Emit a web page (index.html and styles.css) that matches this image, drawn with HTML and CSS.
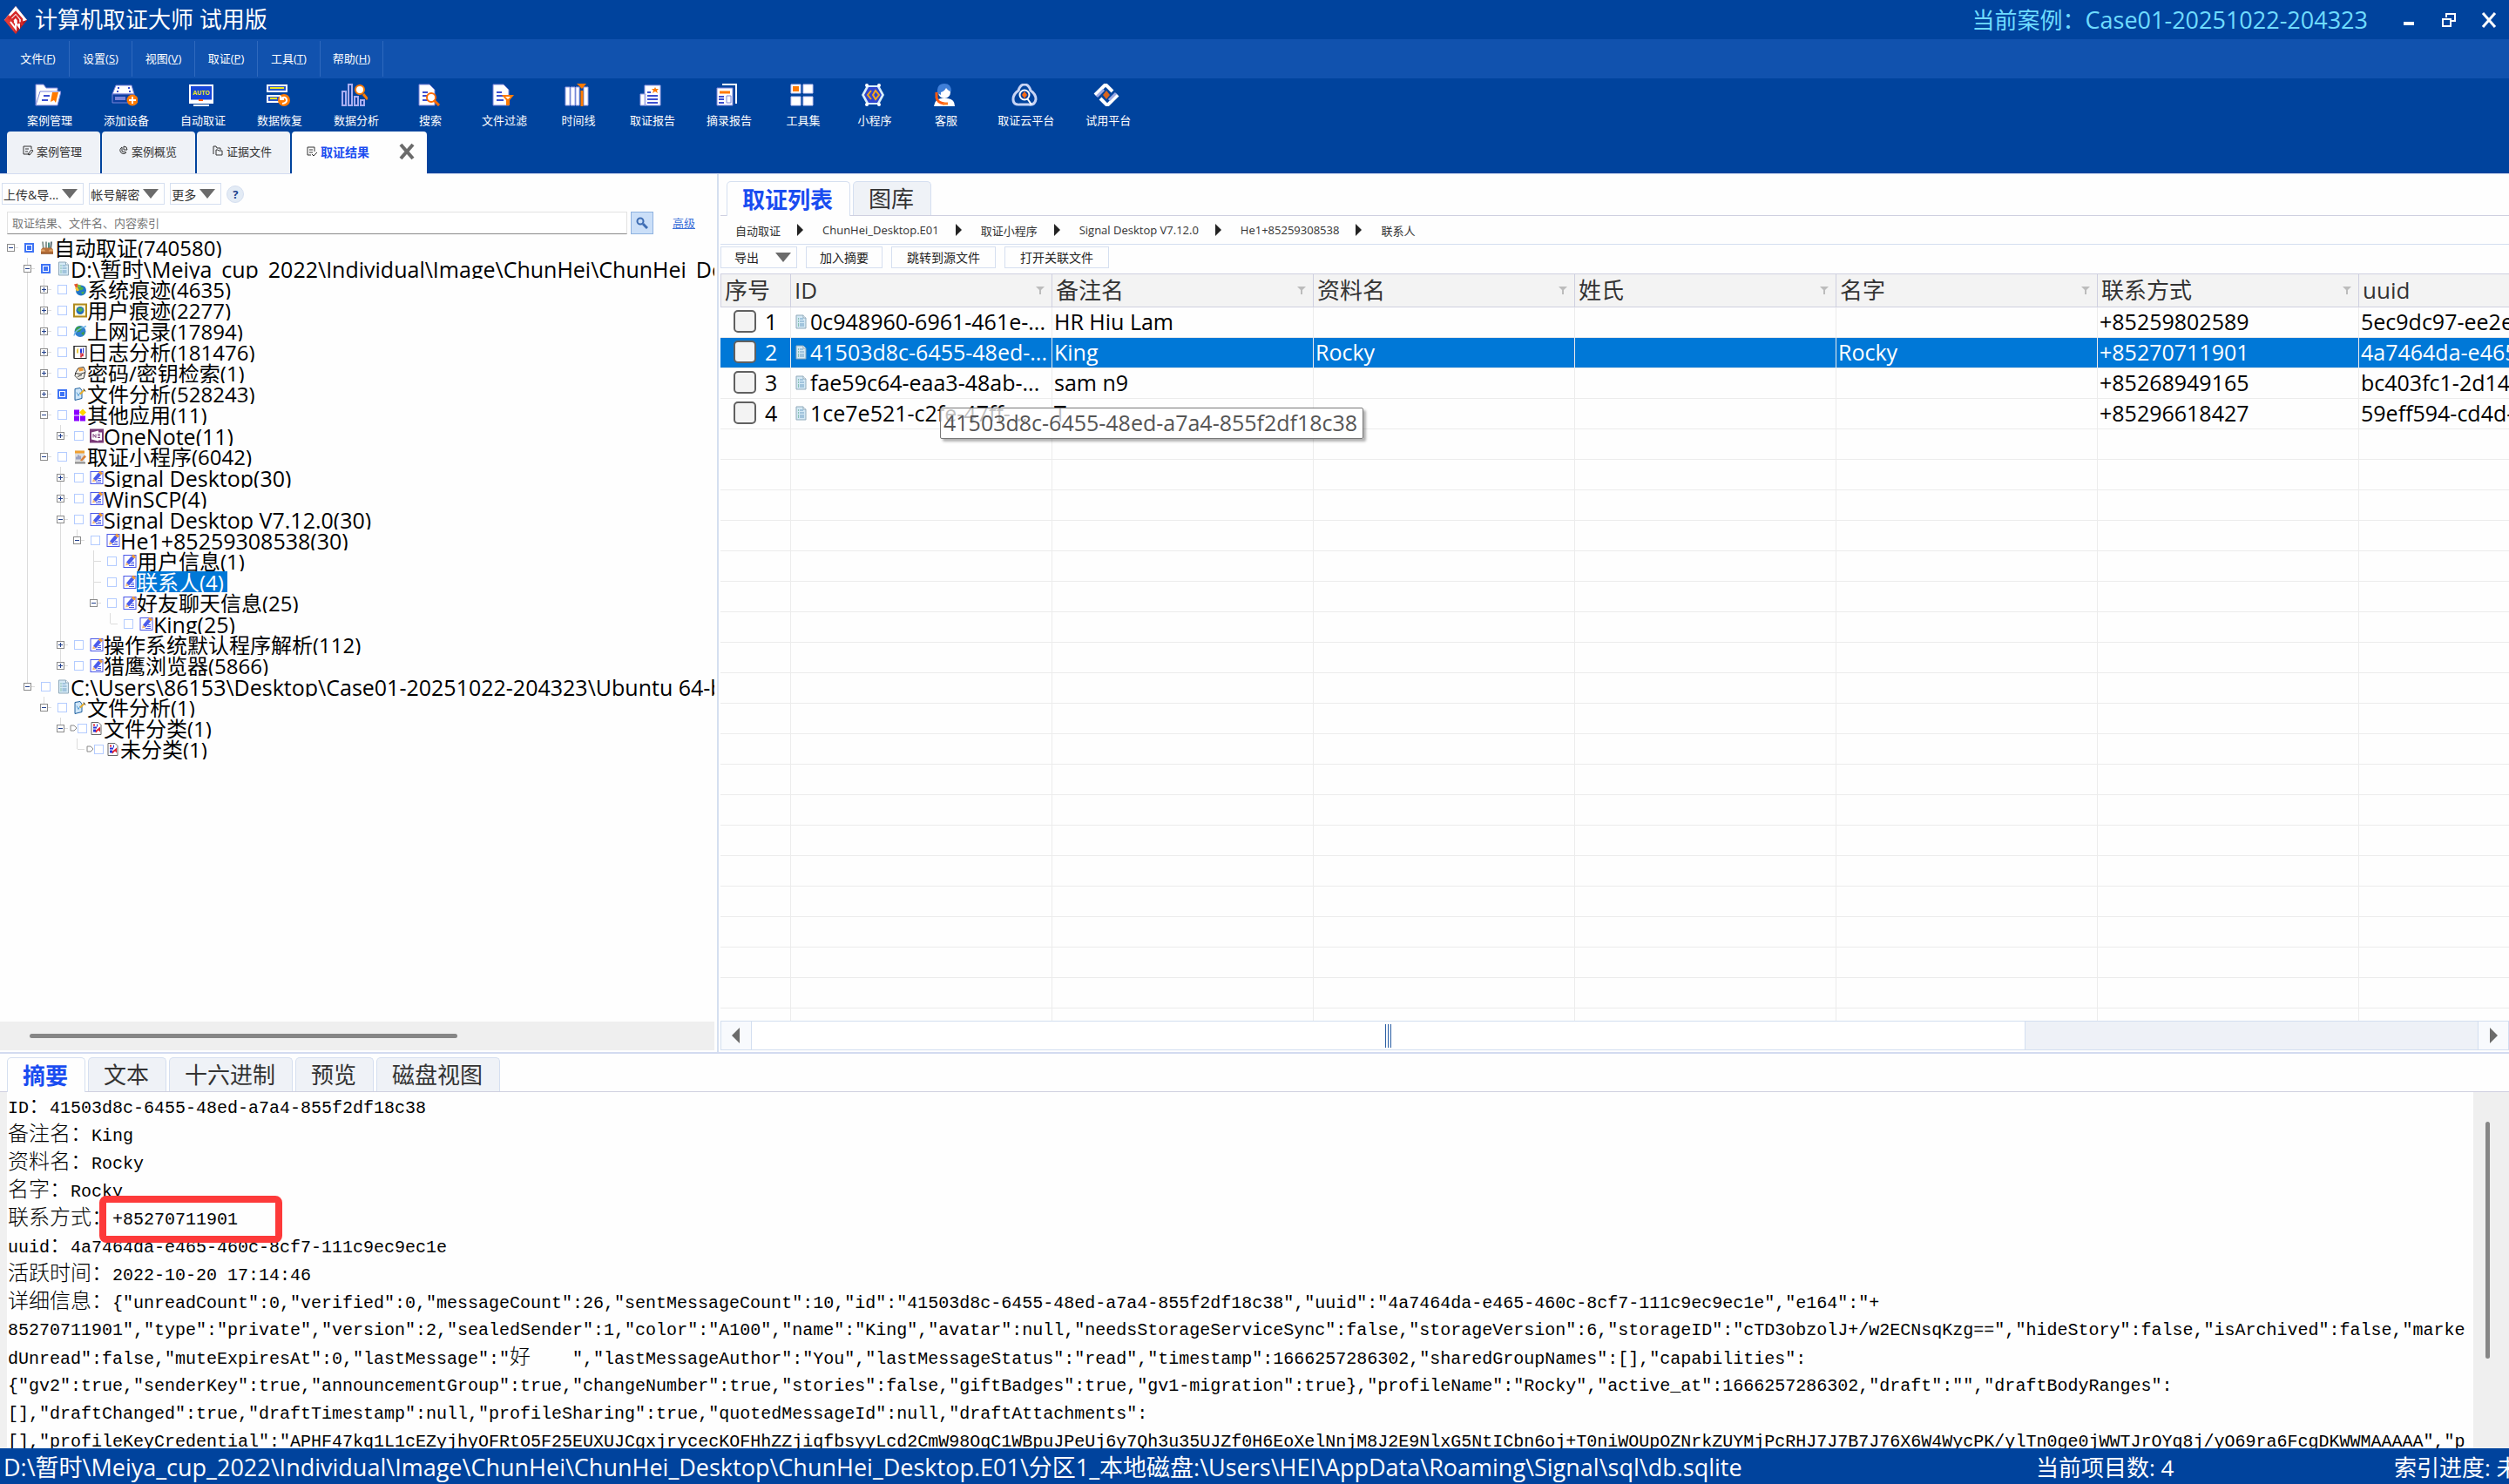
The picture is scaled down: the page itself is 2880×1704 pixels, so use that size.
FILE: index.html
```html
<!DOCTYPE html>
<html lang="zh-CN">
<head>
<meta charset="utf-8">
<title>计算机取证大师 试用版</title>
<link rel="stylesheet" href="styles.css">
</head>
<body>
<svg class="defs" aria-hidden="true">
  <symbol id="i-disk" viewBox="0 0 16 16"><path d="M2 1h2l1 9H3zM6 1h2v9H6z" fill="#8a9a96"/><path d="M9 2h2v8H9z" fill="#4e8f86"/><path d="M12 1h2l-1 9h-2z" fill="#5f6f78"/><path d="M1 10l2-2h10l2 2v5H1z" fill="#b9713a"/><path d="M1 10h4l1 2h4l1-2h4v2H1z" fill="#e0a56b"/><path d="M1 14h14v1H1z" fill="#7d4318"/></symbol>
  <symbol id="i-doc" viewBox="0 0 13 17"><path d="M1 1h8l3 3v12H1z" fill="#d4e9f5" stroke="#8fa9ba"/><path d="M9 1v3h3" fill="#fff" stroke="#8fa9ba"/><path d="M3 5h1M3 8h1M3 11h1M3 13h1" stroke="#3c9a6a"/><path d="M5 5h4M5 8h5M5 11h5M5 13h5" stroke="#6f9fc4"/></symbol>
  <symbol id="i-globe" viewBox="0 0 16 16"><circle cx="9" cy="9" r="6" fill="#1f74c8"/><path d="M7 5q4-1 5 2l-3 2-3-1zM9 11l4-1-2 4z" fill="#49b04a"/><path d="M1 2l4-1 1 4-3 1z" fill="#e4582b"/><path d="M5 2l4 1-1 3-3-1z" fill="#7ac143"/><path d="M2 6l3-1 2 4-3 1z" fill="#f5c431"/></symbol>
  <symbol id="i-user" viewBox="0 0 16 16"><rect x="1" y="1" width="14" height="14" fill="#fff7d8" stroke="#b08a1c" stroke-width="2"/><circle cx="8" cy="8" r="4.500" fill="#1f6fc0"/><path d="M6 5l4 0 1 3-3 2-3-2z" fill="#4fb04c"/></symbol>
  <symbol id="i-net" viewBox="0 0 16 16"><circle cx="8" cy="8" r="6.500" fill="#2f7fcf"/><path d="M4 3q4-2 7 1l-3 4-4 1-2-2zM9 10l4-2-1 5z" fill="#3c9d47"/><path d="M1 13q1-7 14-11" stroke="#6fb5e8" stroke-width="1.500" fill="none"/></symbol>
  <symbol id="i-log" viewBox="0 0 16 16"><rect x="1" y="1" width="14" height="14" fill="#fff" stroke="#222"/><path d="M1 1v14" stroke="#222" stroke-width="2" stroke-dasharray="1 1"/><path d="M4 5l2-2v6H4z" fill="#e8c840"/><path d="M8 4h2v5H8zM11 3h1v6h-1z" fill="#2433d8"/><path d="M8 10h3v2H9v2" stroke="#d02030" fill="none" stroke-width="1.500"/></symbol>
  <symbol id="i-key" viewBox="0 0 16 16"><path d="M3 7l3-5 6-1 2 5-2 8-6 1-4-4z" fill="#f3f0e8" stroke="#333"/><path d="M6 2l5 0 1 3-5 1z" fill="#f29a30"/><path d="M2 8l6 1 6-2M5 12l5-2" stroke="#333" fill="none"/></symbol>
  <symbol id="i-edit" viewBox="0 0 16 16"><path d="M2 2l6-1 2 3v9l-8 2z" fill="#cfe6f8" stroke="#1d5f9e"/><path d="M4 6l2 4 2-4" stroke="#5aa0d6" fill="none"/><path d="M8 8l5-5" stroke="#e8ad2a" stroke-width="2"/><path d="M12 2l2 3" stroke="#2a2a2a"/></symbol>
  <symbol id="i-apps" viewBox="0 0 16 16"><path d="M1 2h6v6H1zM1 9h6v6H1zM8 9h6v6H8z" fill="#8a00ff"/><path d="M11 1l4 4-4 4-4-4z" fill="#ffd400"/></symbol>
  <symbol id="i-one" viewBox="0 0 16 16"><rect width="16" height="16" fill="#7a3a78"/><path d="M2 4l8-2v2h4v9h-4v1l-8-2z" fill="#fff"/><path d="M4 10V6l3 4V6M9 6h3M9 8h3M9 10h3" stroke="#7a3a78" fill="none"/></symbol>
  <symbol id="i-mini" viewBox="0 0 16 16"><path d="M2 1h11v14H2z" fill="#dcdcdc"/><path d="M2 1h11v3H2z" fill="#f0a030"/><path d="M4 11V8M6 11V6M8 11V7" stroke="#5566aa"/><path d="M8 12l5-6 2 2-5 5z" fill="#d9803a"/><path d="M2 14h12v2H2z" fill="#8a8a8a"/></symbol>
  <symbol id="i-pen" viewBox="0 0 16 16"><rect x="1" y="1" width="14" height="14" fill="#fff" stroke="#4a57e8"/><path d="M4 9l6-7 3 3-6 7z" fill="#4b5bea"/><path d="M10 2l2-2 3 3-2 2z" fill="#f09a38"/><path d="M4 9l3 3-4 1z" fill="#f3b878"/><path d="M10 9h3M9 11h4M7 13h6" stroke="#4a57e8"/></symbol>
  <symbol id="i-cat" viewBox="0 0 16 16"><path d="M2 1h8l3 3v11H2z" fill="#fff" stroke="#666"/><path d="M4 3h2v2H4zM6 11l6-5v6l-2-2-3 3z" fill="#e02030"/><path d="M4 6h4v2H4zM4 9h3v3H4zM8 3h1v3H8z" fill="#2433d8"/></symbol>
  <symbol id="i-filter" viewBox="0 0 10 10"><path d="M0 0h10L6 4v5H4V4z" fill="#bcbcbc"/></symbol>
</svg>

<header class="top">
  <div class="titlebar">
    <svg class="logo" viewBox="0 0 26 32"><path d="M13 0l13 16-13 16L0 16z" fill="#d42a2a"/><path d="M13 0l13 16-13 4L0 16z" fill="#fff"/><path d="M0 16l5-6 6 7v12l2 3z" fill="#e23a36"/><path d="M13 32l13-16-7 3-6 13z" fill="#a91f26"/><path d="M5 15l8-8 7 8v7M9 20v-4l4-4 3 4v8" fill="none" stroke="#d62828" stroke-width="2.500"/><path d="M7 18l6 8v-7l4 5v-4" fill="none" stroke="#fff" stroke-width="2"/></svg>
    <h1 class="app-name">计算机取证大师 试用版</h1>
    <p class="case-name">当前案例：<span>Case01-20251022-204323</span></p>
    <div class="win-buttons">
      <button type="button" aria-label="最小化"><svg viewBox="0 0 18 18"><path d="M3 13h12" stroke="#fff" stroke-width="4"/></svg></button>
      <button type="button" aria-label="还原"><svg viewBox="0 0 18 18"><path d="M6 6V2h10v8h-4M5 2h12" fill="none" stroke="#fff" stroke-width="2"/><path d="M2 8h9v8H2z" fill="none" stroke="#fff" stroke-width="2"/></svg></button>
      <button type="button" aria-label="关闭"><svg viewBox="0 0 18 18"><path d="M2 1l14 16M16 1L2 17" stroke="#fff" stroke-width="3"/></svg></button>
    </div>
  </div>
  <nav class="menubar" aria-label="菜单">
    <button type="button">文件(<u>F</u>)</button>
    <button type="button">设置(<u>S</u>)</button>
    <button type="button">视图(<u>V</u>)</button>
    <button type="button">取证(<u>P</u>)</button>
    <button type="button">工具(<u>T</u>)</button>
    <button type="button">帮助(<u>H</u>)</button>
  </nav>
  <div class="toolbar">
    <button type="button"><svg viewBox="0 0 30 26"><path d="M1 25V1h9l3 4h13v4" fill="#fff" stroke="#7a84d8"/><path d="M6 9h24l-4 16H1z" fill="#fff" stroke="#7a84d8"/><path d="M10 14h7M8 19h7" stroke="#3c4fd0" stroke-width="2"/><path d="M20 10h7l-3 12-2-3-4 2z" fill="#ff7a00"/></svg>案例管理</button>
    <button type="button"><svg viewBox="0 0 30 26"><path d="M5 2h18l3 10H1z" fill="#fff" stroke="#7a84d8"/><path d="M1 12h25v10H1z" fill="#0d3fa0" stroke="#7a84d8"/><path d="M4 17h12" stroke="#7a84d8" stroke-width="4"/><path d="M7 5h2M19 5h2M6 9h2M20 9h2" stroke="#3c4fd0" stroke-width="2"/><circle cx="24" cy="19" r="6.500" fill="#ff7a00"/><path d="M20 19h8M24 15v8" stroke="#fff" stroke-width="2"/></svg>添加设备</button>
    <button type="button"><svg viewBox="0 0 30 26"><rect x="2" y="2" width="26" height="20" fill="#1746d8" stroke="#fff" stroke-width="2"/><path d="M3 20h24" stroke="#fff" stroke-width="3"/><path d="M12 19h5" stroke="#ff5a00" stroke-width="2"/><path d="M6 25h18" stroke="#fff" stroke-width="2"/><text x="15" y="13" class="auto-text">AUTO</text></svg>自动取证</button>
    <button type="button"><svg viewBox="0 0 30 26"><path d="M3 2h22v7H3zM3 14h22v7H3z" fill="#2a55c8" stroke="#fff" stroke-width="2"/><path d="M6 5h16M6 17h8" stroke="#ece51c" stroke-width="2"/><circle cx="22" cy="19" r="7" fill="#ff7a00"/><path d="M20 23q6-1 5-5-2-4-6-1M18 14v4h4" fill="none" stroke="#fff" stroke-width="2"/></svg>数据恢复</button>
    <button type="button"><svg viewBox="0 0 30 26"><path d="M1 9h4v16H1zM8 1h4v24H8zM15 15h4v10h-4zM22 19h4v6h-4z" fill="#0d3fa0" stroke="#a9aef0" stroke-width="2"/><path d="M25 12l5 6" stroke="#ff7a00" stroke-width="3"/><circle cx="21" cy="7" r="5" fill="#fff" stroke="#ff7a00" stroke-width="2"/></svg>数据分析</button>
    <button type="button"><svg viewBox="0 0 30 26"><path d="M4 1h12l6 6v18H4z" fill="#fff" stroke="#7a84d8"/><path d="M8 10h6M8 14h5M8 19h6" stroke="#3c4fd0" stroke-width="2"/><circle cx="18" cy="16" r="5" fill="#fff" stroke="#ff6a00" stroke-width="2"/><path d="M21 19l6 6" stroke="#ff6a00" stroke-width="3"/></svg>搜索</button>
    <button type="button"><svg viewBox="0 0 30 26"><path d="M4 1h12l6 6v18H4z" fill="#fff" stroke="#7a84d8"/><path d="M8 10h6M8 14h8M8 19h8" stroke="#3c4fd0" stroke-width="2"/><path d="M14 13h14l-5 6v6l-4 0v-6z" fill="#ff7a00"/><path d="M18 15h6l-3 3z" fill="#fff"/></svg>文件过滤</button>
    <button type="button"><svg viewBox="0 0 30 26"><path d="M2 4h5v21H2zM8 4h5v21H8zM14 4h4v21h-4zM23 4h5v21h-5z" fill="#fff" stroke="#9aa0e6"/><path d="M21 8v18" stroke="#ff7a00" stroke-width="3"/><path d="M15 0h11l-5 6z" fill="#ff7a00"/></svg>时间线</button>
    <button type="button"><svg viewBox="0 0 30 26"><path d="M3 12h6v13H3zM8 2h18v23H8z" fill="#fff" stroke="#9aa0e6"/><path d="M11 10h4M11 14h12M11 18h12M11 22h12" stroke="#3c4fd0" stroke-width="2"/><path d="M20 4l1 2h3l-2 2 1 3-3-2-3 2 1-3-2-2h3z" fill="#ff7a00"/></svg>取证报告</button>
    <button type="button"><svg viewBox="0 0 30 26"><path d="M9 1h16v22" fill="none" stroke="#fff" stroke-width="2"/><path d="M3 5h18v20H3z" fill="#fff" stroke="#7a84d8"/><path d="M6 10h12" stroke="#ff7a00" stroke-width="3"/><path d="M5 15h6M5 18h6M5 22h6" stroke="#3c4fd0" stroke-width="2"/><path d="M14 14h5v8h-5z" fill="#fff" stroke="#7a84d8"/></svg>摘录报告</button>
    <button type="button"><svg viewBox="0 0 30 26"><path d="M3 1h11v10H3zM17 1h11v10H17zM3 15h11v10H3zM17 15h11v10H17z" fill="#fff" stroke="#c5c8f4"/><path d="M5 3h7v6H5z" fill="#ff7a00"/></svg>工具集</button>
    <button type="button"><svg viewBox="0 0 30 26"><path d="M8 2h14l6 11-6 11H8L2 13z" fill="#d8f0fa"/><path d="M10 4h10l5 9-5 9H10l-5-9z" fill="#2f45d0"/><path d="M13 8l-4 5 4 5M18 8l4 5-4 5-3-5z" fill="none" stroke="#f0a818" stroke-width="2"/><circle cx="8" cy="2" r="2" fill="#fff"/><circle cx="22" cy="2" r="2" fill="#fff"/><circle cx="8" cy="24" r="2" fill="#fff"/><circle cx="22" cy="24" r="2" fill="#fff"/></svg>小程序</button>
    <button type="button"><svg viewBox="0 0 30 26"><path d="M3 26q1-8 8-9h8q8 1 8 9z" fill="#fff"/><circle cx="15" cy="10" r="7" fill="#fff"/><path d="M7 11Q6 0 15 0q8 0 8 9-3 0-6-4-2 4-6 5v3z" fill="#3f7fd8"/><path d="M6 10v6q1 6 9 7" fill="none" stroke="#ff5a10" stroke-width="3"/><path d="M13 23h6" stroke="#ff7a20" stroke-width="3"/></svg>客服</button>
    <button type="button"><svg viewBox="0 0 30 26"><path d="M8 8q2-7 7-7t7 7q6 4 6 10-1 7-8 6H10Q2 25 2 18 2 12 8 8z" fill="none" stroke="#c8d4f4" stroke-width="3"/><circle cx="15" cy="13" r="5.500" fill="#0a3f98" stroke="#fff" stroke-width="2"/><path d="M18 17l5 7" stroke="#fff" stroke-width="2"/><path d="M15 9l3 4-3 4-3-4z" fill="#ff6a10"/></svg>取证云平台</button>
    <button type="button"><svg viewBox="0 0 30 26"><path d="M2 13L14 1l8 8" fill="none" stroke="#fff" stroke-width="4"/><path d="M28 13L16 25l-8-8" fill="none" stroke="#fff" stroke-width="4"/><path d="M4 15l8-8M26 11l-8 8" stroke="#9aa8e4" stroke-width="3"/><path d="M15 8l4 5-4 5-4-5z" fill="#d9641e"/></svg>试用平台</button>
  </div>
  <div class="page-tabs" role="tablist">
    <button type="button" role="tab"><svg viewBox="0 0 12 12"><path d="M8 10H1V1h9v3M3 4h4M3 7h3M6 10l4-5 2 1-4 5z"/></svg>案例管理</button>
    <button type="button" role="tab"><svg viewBox="0 0 12 12"><path d="M5 2a4 4 0 1 0 5 6L5 7zM7 1v4h4q0-4-4-4z"/></svg>案例概览</button>
    <button type="button" role="tab"><svg viewBox="0 0 12 12"><path d="M1 10V1h3l1 2h4v2M4 11V5h2l1 1h4v5z"/></svg>证据文件</button>
    <button type="button" role="tab" class="active" aria-selected="true"><svg viewBox="0 0 12 12"><path d="M5 10H1V1h8v5M3 4h4M3 7h4M6 9l2 2 4-4"/></svg>取证结果<svg class="close" viewBox="0 0 16 16"><path d="M1 0l14 16M15 0L1 16"/></svg></button>
  </div>
</header>

<main class="workspace">
  <aside class="side">
    <div class="side-tools">
      <button type="button">上传&amp;导...<i class="caret"></i></button>
      <button type="button">帐号解密<i class="caret"></i></button>
      <button type="button">更多<i class="caret"></i></button>
      <button type="button" class="help">?</button>
    </div>
    <form class="search">
      <input type="text" aria-label="搜索" placeholder="取证结果、文件名、内容索引">
      <button type="button" aria-label="搜索"><svg viewBox="0 0 14 14"><circle cx="5" cy="5" r="3.500" fill="none" stroke="#3f6eb4" stroke-width="2"/><path d="M8 8l5 5" stroke="#3f6eb4" stroke-width="3"/></svg></button>
      <a href="#">高级</a>
    </form>
    <ul class="tree">
      <li><div class="node"><i class="exp"></i><input type="checkbox" aria-label="自动取证" checked><svg><use href="#i-disk"/></svg><span>自动取证(740580)</span></div>
        <ul>
          <li><div class="node"><i class="exp"></i><input type="checkbox" aria-label="ChunHei_Desktop.E01" checked><svg><use href="#i-doc"/></svg><span class="latin">D:\暂时\Meiya_cup_2022\Individual\Image\ChunHei\ChunHei_Desktop</span></div>
            <ul>
              <li><div class="node"><i class="exp plus"></i><input type="checkbox" aria-label="系统痕迹"><svg><use href="#i-globe"/></svg><span>系统痕迹(4635)</span></div></li>
              <li><div class="node"><i class="exp plus"></i><input type="checkbox" aria-label="用户痕迹"><svg><use href="#i-user"/></svg><span>用户痕迹(2277)</span></div></li>
              <li><div class="node"><i class="exp plus"></i><input type="checkbox" aria-label="上网记录"><svg><use href="#i-net"/></svg><span>上网记录(17894)</span></div></li>
              <li><div class="node"><i class="exp plus"></i><input type="checkbox" aria-label="日志分析"><svg><use href="#i-log"/></svg><span>日志分析(181476)</span></div></li>
              <li><div class="node"><i class="exp plus"></i><input type="checkbox" aria-label="密码检索"><svg><use href="#i-key"/></svg><span>密码/密钥检索(1)</span></div></li>
              <li><div class="node"><i class="exp plus"></i><input type="checkbox" aria-label="文件分析" checked><svg><use href="#i-edit"/></svg><span>文件分析(528243)</span></div></li>
              <li><div class="node"><i class="exp"></i><input type="checkbox" aria-label="其他应用"><svg><use href="#i-apps"/></svg><span>其他应用(11)</span></div>
                <ul>
                  <li><div class="node"><i class="exp plus"></i><input type="checkbox" aria-label="OneNote"><svg><use href="#i-one"/></svg><span class="latin">OneNote(11)</span></div></li>
                </ul>
              </li>
              <li><div class="node"><i class="exp"></i><input type="checkbox" aria-label="取证小程序"><svg><use href="#i-mini"/></svg><span>取证小程序(6042)</span></div>
                <ul>
                  <li><div class="node"><i class="exp plus"></i><input type="checkbox" aria-label="Signal Desktop"><svg><use href="#i-pen"/></svg><span class="latin">Signal Desktop(30)</span></div></li>
                  <li><div class="node"><i class="exp plus"></i><input type="checkbox" aria-label="WinSCP"><svg><use href="#i-pen"/></svg><span class="latin">WinSCP(4)</span></div></li>
                  <li><div class="node"><i class="exp"></i><input type="checkbox" aria-label="Signal Desktop V7.12.0"><svg><use href="#i-pen"/></svg><span class="latin">Signal Desktop V7.12.0(30)</span></div>
                    <ul>
                      <li><div class="node"><i class="exp"></i><input type="checkbox" aria-label="He1"><svg><use href="#i-pen"/></svg><span class="latin">He1+85259308538(30)</span></div>
                        <ul>
                          <li><div class="node"><i class="exp leaf"></i><input type="checkbox" aria-label="用户信息"><svg><use href="#i-pen"/></svg><span>用户信息(1)</span></div></li>
                          <li><div class="node selected"><i class="exp leaf"></i><input type="checkbox" aria-label="联系人"><svg><use href="#i-pen"/></svg><span>联系人(4)</span></div></li>
                          <li><div class="node"><i class="exp"></i><input type="checkbox" aria-label="好友聊天信息"><svg><use href="#i-pen"/></svg><span>好友聊天信息(25)</span></div>
                            <ul>
                              <li><div class="node"><i class="exp leaf"></i><input type="checkbox" aria-label="King"><svg><use href="#i-pen"/></svg><span class="latin">King(25)</span></div></li>
                            </ul>
                          </li>
                        </ul>
                      </li>
                    </ul>
                  </li>
                  <li><div class="node"><i class="exp plus"></i><input type="checkbox" aria-label="操作系统默认程序解析"><svg><use href="#i-pen"/></svg><span>操作系统默认程序解析(112)</span></div></li>
                  <li><div class="node"><i class="exp plus"></i><input type="checkbox" aria-label="猎鹰浏览器"><svg><use href="#i-pen"/></svg><span>猎鹰浏览器(5866)</span></div></li>
                </ul>
              </li>
            </ul>
          </li>
          <li><div class="node"><i class="exp"></i><input type="checkbox" aria-label="Ubuntu 64-bit"><svg><use href="#i-doc"/></svg><span class="latin">C:\Users\86153\Desktop\Case01-20251022-204323\Ubuntu 64-bit</span></div>
            <ul>
              <li><div class="node"><i class="exp"></i><input type="checkbox" aria-label="文件分析"><svg><use href="#i-edit"/></svg><span>文件分析(1)</span></div>
                <ul>
                  <li><div class="node tagged"><i class="exp"></i><svg class="tag" viewBox="0 0 9 8"><path d="M1 1h4l3 3-3 3H1z" fill="#fff" stroke="#888"/></svg><input type="checkbox" aria-label="文件分类"><svg><use href="#i-cat"/></svg><span>文件分类(1)</span></div>
                    <ul>
                      <li><div class="node tagged"><i class="exp leaf"></i><svg class="tag" viewBox="0 0 9 8"><path d="M1 1h4l3 3-3 3H1z" fill="#fff" stroke="#888"/></svg><input type="checkbox" aria-label="未分类"><svg><use href="#i-cat"/></svg><span>未分类(1)</span></div></li>
                    </ul>
                  </li>
                </ul>
              </li>
            </ul>
          </li>
        </ul>
      </li>
    </ul>
    <div class="side-scroll"><div class="thumb"></div></div>
  </aside>

  <section class="results">
    <div class="tabs result-tabs" role="tablist">
      <button type="button" role="tab" class="active" aria-selected="true">取证列表</button>
      <button type="button" role="tab">图库</button>
    </div>
    <nav class="crumbs" aria-label="路径">
      <a href="#">自动取证</a><i></i><a href="#">ChunHei_Desktop.E01</a><i></i><a href="#">取证小程序</a><i></i><a href="#">Signal Desktop V7.12.0</a><i></i><a href="#">He1+85259308538</a><i></i><a href="#">联系人</a>
    </nav>
    <div class="actions">
      <button type="button" class="drop">导出<i class="caret"></i></button>
      <button type="button">加入摘要</button>
      <button type="button" class="wide">跳转到源文件</button>
      <button type="button" class="wide">打开关联文件</button>
    </div>
    <div class="grid">
      <table>
        <colgroup><col class="c-no"><col><col><col><col><col><col><col></colgroup>
        <thead>
          <tr>
            <th>序号</th>
            <th><div>ID<svg><use href="#i-filter"/></svg></div></th>
            <th><div>备注名<svg><use href="#i-filter"/></svg></div></th>
            <th><div>资料名<svg><use href="#i-filter"/></svg></div></th>
            <th><div>姓氏<svg><use href="#i-filter"/></svg></div></th>
            <th><div>名字<svg><use href="#i-filter"/></svg></div></th>
            <th><div>联系方式<svg><use href="#i-filter"/></svg></div></th>
            <th><div>uuid</div></th>
          </tr>
        </thead>
        <tbody>
          <tr><td><label><input type="checkbox">1</label></td><td><div class="id"><svg><use href="#i-doc"/></svg>0c948960-6961-461e-...</div></td><td>HR Hiu Lam</td><td></td><td></td><td></td><td>+85259802589</td><td>5ec9dc97-ee2e-4</td></tr>
          <tr class="selected"><td><label><input type="checkbox">2</label></td><td><div class="id"><svg><use href="#i-doc"/></svg>41503d8c-6455-48ed-...</div></td><td>King</td><td>Rocky</td><td></td><td>Rocky</td><td>+85270711901</td><td>4a7464da-e465-4</td></tr>
          <tr><td><label><input type="checkbox">3</label></td><td><div class="id"><svg><use href="#i-doc"/></svg>fae59c64-eaa3-48ab-...</div></td><td>sam n9</td><td></td><td></td><td></td><td>+85268949165</td><td>bc403fc1-2d14-4</td></tr>
          <tr><td><label><input type="checkbox">4</label></td><td><div class="id"><svg><use href="#i-doc"/></svg>1ce7e521-c2fe-47ff-...</div></td><td>T</td><td></td><td></td><td></td><td>+85296618427</td><td>59eff594-cd4d-4</td></tr>
        </tbody>
      </table>
      <div class="blank-rows"></div>
      <div class="tooltip" role="tooltip">41503d8c-6455-48ed-a7a4-855f2df18c38</div>
    </div>
    <div class="grid-scroll">
      <button type="button" aria-label="向左"><svg viewBox="0 0 10 18"><path d="M9 0v18L0 9z" fill="#6b6b6b"/></svg></button>
      <div class="bar"><i></i></div>
      <div class="rest"></div>
      <button type="button" aria-label="向右"><svg viewBox="0 0 10 18"><path d="M1 0v18l9-9z" fill="#6b6b6b"/></svg></button>
    </div>
  </section>
</main>

<section class="detail">
  <div class="tabs detail-tabs" role="tablist">
    <button type="button" role="tab" class="active" aria-selected="true">摘要</button>
    <button type="button" role="tab">文本</button>
    <button type="button" role="tab">十六进制</button>
    <button type="button" role="tab">预览</button>
    <button type="button" role="tab">磁盘视图</button>
  </div>
  <div class="detail-body">
    <div class="summary">
      <p>ID<b>：</b>41503d8c-6455-48ed-a7a4-855f2df18c38</p>
      <p><b>备注名：</b>King</p>
      <p><b>资料名：</b>Rocky</p>
      <p><b>名字：</b>Rocky</p>
      <p><b>联系方式：</b><span class="marked">+85270711901</span></p>
      <p>uuid<b>：</b>4a7464da-e465-460c-8cf7-111c9ec9ec1e</p>
      <p><b>活跃时间：</b>2022-10-20 17:14:46</p>
      <p><b>详细信息：</b>{"unreadCount":0,"verified":0,"messageCount":26,"sentMessageCount":10,"id":"41503d8c-6455-48ed-a7a4-855f2df18c38","uuid":"4a7464da-e465-460c-8cf7-111c9ec9ec1e","e164":"+</p>
      <p>85270711901","type":"private","version":2,"sealedSender":1,"color":"A100","name":"King","avatar":null,"needsStorageServiceSync":false,"storageVersion":6,"storageID":"cTD3obzolJ+/w2ECNsqKzg==","hideStory":false,"isArchived":false,"marke</p>
      <p>dUnread":false,"muteExpiresAt":0,"lastMessage":"<b>好</b>    ","lastMessageAuthor":"You","lastMessageStatus":"read","timestamp":1666257286302,"sharedGroupNames":[],"capabilities":</p>
      <p>{"gv2":true,"senderKey":true,"announcementGroup":true,"changeNumber":true,"stories":false,"giftBadges":true,"gv1-migration":true},"profileName":"Rocky","active_at":1666257286302,"draft":"","draftBodyRanges":</p>
      <p>[],"draftChanged":true,"draftTimestamp":null,"profileSharing":true,"quotedMessageId":null,"draftAttachments":</p>
      <p>[],"profileKeyCredential":"APHF47kq1L1cEZyjhyOFRtO5F25EUXUJCgxjrycecKOFHhZZjiqfbsyyLcd2CmW98OqC1WBpuJPeUj6y7Qh3u35UJZf0H6EoXelNnjM8J2E9NlxG5NtICbn6oj+T0niWOUpOZNrkZUYMjPcRHJ7J7B7J76X6W4WycPK/ylTn0ge0jWWTJrOYq8j/yO69ra6FcgDKWWMAAAAA","p</p>
    </div>
    <div class="detail-scroll"><div class="thumb"></div></div>
  </div>
</section>

<footer class="status">
  <span class="path">D:\暂时\Meiya_cup_2022\Individual\Image\ChunHei\ChunHei_Desktop\ChunHei_Desktop.E01\分区1_本地磁盘:\Users\HEI\AppData\Roaming\Signal\sql\db.sqlite</span>
  <span class="count">当前项目数: 4</span>
  <span class="index">索引进度: 未开始</span>
</footer>
</body>
</html>
```
FILE: styles.css
```css
*, *::before, *::after { box-sizing: border-box; margin: 0; padding: 0; }

body {
  display: flex;
  flex-direction: column;
  height: 100vh;
  overflow: hidden;
  background: #fefefe;
  color: #000;
  font-family: "Open Sans", "Noto Sans CJK SC", sans-serif;
  font-size: 13px;
}

button { border: 0; background: none; color: inherit; font: inherit; white-space: nowrap; }
ul { list-style: none; }
.defs { position: absolute; width: 0; height: 0; }

/* header */
.top { background: #00439d; color: #fff; border-bottom: 1px solid #d3dbf0; }
.titlebar { display: flex; align-items: center; height: 45px; padding: 0 14px 0 5px; }
.logo { width: 26px; height: 32px; margin-right: 9px; }
.app-name { flex: 1; font-size: 26px; line-height: 45px; font-weight: 400; }
.case-name { font-size: 26px; line-height: 45px; color: #6fdcff; }
.case-name span { font-size: 27px; }
.win-buttons { display: flex; gap: 28px; margin-left: 38px; }
.win-buttons button { width: 18px; height: 30px; }
.win-buttons svg { display: block; width: 18px; height: 18px; }

.menubar { display: flex; height: 45px; padding: 2px 0 2px 8px; background: #1152ae; }
.menubar button { width: 72px; padding-bottom: 2px; border-right: 1px solid #2f69bd; }

.toolbar { display: flex; height: 61px; padding: 6px 0 0 13px; }
.toolbar button { display: flex; flex-direction: column; align-items: center; min-width: 82px; padding: 0 18px; line-height: 20px; }
.toolbar svg { width: 30px; height: 26px; margin: 0 4px 6px 0; }
.auto-text { font-size: 7px; font-weight: 700; fill: #ece51c; text-anchor: middle; }

.page-tabs { display: flex; gap: 2px; padding-left: 8px; }
.page-tabs button { display: flex; align-items: center; gap: 4px; height: 48px; width: 107px; padding: 0 0 4px 18px; border-radius: 4px 4px 0 0; background: #eff2f7; color: #333; }
.page-tabs svg { flex: none; width: 12px; height: 12px; fill: none; stroke: #333; overflow: visible; }
.page-tabs .active { width: 155px; height: 49px; margin-bottom: -1px; padding-left: 17px; background: #fefefe; color: #1a4cf0; font-size: 14px; font-weight: 700; }
.page-tabs .close { width: 16px; height: 16px; margin-left: 31px; stroke: #6b6b6b; stroke-width: 4; }

/* workspace */
.workspace { display: flex; flex: 1; min-height: 0; border-bottom: 2px solid #d3dbf0; }
.side { display: flex; flex-direction: column; width: 825px; border-right: 2px solid #d5dff0; padding: 10px 3px 2px 0; }
.caret { display: inline-block; border: 9px solid transparent; border-top: 11px solid #6b6b6b; border-bottom: 0; }

.side-tools { display: flex; align-items: center; gap: 6px; padding-left: 2px; font-size: 14px; color: #333; }
.side-tools button { display: flex; align-items: center; gap: 4px; height: 25px; padding: 0 6px 0 1px; border: 1px solid #d5dff0; }
.side-tools .help { justify-content: center; width: 20px; height: 20px; padding: 0; border-radius: 50%; background: #e3ebf5; color: #1a3f8c; font-size: 13px; font-weight: 700; line-height: 18px; }

.search { display: flex; align-items: center; height: 27px; margin-top: 7px; padding-left: 8px; }
.search input { width: 712px; height: 26px; padding: 0 5px; border: 1px solid #e2e2e2; border-bottom-color: #8a8a8a; background: #fff; font: inherit; }
.search input::placeholder { color: #777; }
.search button { display: flex; align-items: center; justify-content: center; width: 26px; height: 26px; margin: 0 22px 0 4px; border: 1px solid #8fb2e0; background: #cbdff8; }
.search button svg { width: 14px; height: 14px; }
.search a { color: #3c70d8; }

.tree { flex: 1; overflow: hidden; padding-top: 3px; font-size: 24px; }
.tree ul { padding-left: 19px; }
.tree li { position: relative; }
.tree ul > li::before { content: ""; position: absolute; left: 12px; top: 0; bottom: 0; border-left: 1px solid #dcdcdc; }
.tree ul > li:last-child::before { bottom: auto; height: 12px; }
.node { position: relative; display: flex; align-items: center; height: 24px; padding-left: 8px; }
.node span { height: 24px; line-height: 26px; white-space: nowrap; overflow: hidden; }
.node .latin { font-size: 25px; }
.node > svg { flex: none; width: 16px; height: 17px; margin: 0 0 0 7px; }
.exp { position: relative; flex: none; width: 9px; height: 9px; margin-right: 11px; border: 1px solid #8c8c8c; background: linear-gradient(#22408c, #22408c) center / 5px 1px no-repeat #fff; }
.exp.plus { background: linear-gradient(#22408c, #22408c) center / 5px 1px no-repeat, linear-gradient(#22408c, #22408c) center / 1px 5px no-repeat, #fff; }
.exp::after { content: ""; position: absolute; left: 8px; top: 3px; width: 4px; border-top: 1px solid #dcdcdc; }
.exp.leaf { border-color: transparent; background: none; }
.exp.leaf::after { left: 4px; width: 8px; }
.node input { flex: none; appearance: none; width: 11px; height: 11px; border: 1px solid #b4ccff; background: #fff; }
.node input:checked { border: 2px solid #3f74f5; background: linear-gradient(#3f74f5, #3f74f5) center / 5px 5px no-repeat #fff; }
.node .tag { width: 9px; height: 8px; margin: 0; }
.tagged .exp { margin-right: 6px; }
.tagged .tag + input { margin-right: -4px; }
.node.selected span { background: #0078d7; color: #fff; padding-right: 4px; }

.side-scroll { height: 33px; padding: 14px 0 0 34px; background: #efefef; }
.side-scroll .thumb { width: 491px; height: 5px; border-radius: 3px; background: #868686; }

/* result list */
.results { display: flex; flex: 1; flex-direction: column; min-width: 0; padding: 8px 0 2px 2px; }
.tabs { display: flex; gap: 3px; border-bottom: 1px solid #cfd0e0; font-size: 26px; color: #333; }
.tabs button { height: 39px; padding: 0 19px 0 17px; border: 1px solid #d5dff0; border-bottom: 0; border-radius: 5px 5px 0 0; background: #eff2f7; line-height: 38px; }
.tabs .active { height: 40px; margin-bottom: -1px; background: #fefefe; color: #1a4cf0; font-weight: 700; }
.result-tabs { padding-left: 7px; }

.crumbs { display: flex; align-items: center; height: 33px; padding-left: 17px; border-bottom: 1px solid #d5dff0; }
.crumbs a { color: #333; text-decoration: none; }
.crumbs i { margin: 0 22px 0 19px; border: 7px solid transparent; border-left-color: #222; border-right: 0; }

.actions { display: flex; gap: 10px; padding: 2px 0 6px; font-size: 14px; color: #222; }
.actions button { height: 25px; padding: 0 15px; border: 1px solid #d5dff0; line-height: 22px; }
.actions .wide { padding: 0 17px; }
.actions .drop { display: flex; align-items: center; gap: 19px; padding-right: 6px; }

.grid { position: relative; display: flex; flex: 1; flex-direction: column; min-height: 0; overflow: hidden; }
.grid table { width: 2181px; flex: none; border-collapse: separate; border-spacing: 0; table-layout: fixed; font-size: 25px; }
.grid col { width: 300px; }
.grid .c-no { width: 81px; }
.grid th { height: 39px; padding: 0 4px; border: solid #cfd0e0; border-width: 1px 1px 1px 0; background: #f3f3f3; color: #333; font-size: 26px; font-weight: 400; text-align: left; line-height: 37px; }
.grid th:first-child { border-left-width: 1px; }
.grid th div { display: flex; align-items: center; justify-content: space-between; }
.grid th svg { width: 10px; height: 10px; margin-right: 4px; }
.grid td { height: 35px; padding: 0 2px 2px; border: solid #ececec; border-width: 0 1px 1px 0; line-height: 32px; white-space: nowrap; overflow: hidden; }
.grid label { display: flex; align-items: center; gap: 10px; padding-left: 13px; }
.grid label input { appearance: none; width: 26px; height: 26px; border: 2px solid #606060; border-radius: 5px; background: #f3f3f3; }
.id { display: flex; align-items: center; gap: 4px; padding-left: 3px; }
.id svg { flex: none; width: 13px; height: 17px; }
.grid .selected td { background: #0078d7; color: #fff; }
.blank-rows {
  flex: 1;
  background:
    linear-gradient(to right, transparent 299px, #ececec 299px) -219px 0 / 300px 100% repeat-x,
    linear-gradient(transparent 34px, #ececec 34px) 0 0 / 100% 35px repeat-y;
}
.tooltip { position: absolute; left: 252px; top: 154px; height: 36px; padding: 0 6px 0 3px; border: 1px solid #777; border-radius: 2px; background: rgba(255, 255, 255, .75); box-shadow: 3px 3px 3px rgba(0, 0, 0, .3); color: #555; font-size: 25px; line-height: 32px; white-space: nowrap; }

.grid-scroll { display: flex; height: 34px; border: 1px solid #d3dff0; }
.grid-scroll button { display: flex; align-items: center; justify-content: center; width: 34px; background: #f8fafd; }
.grid-scroll svg { width: 10px; height: 18px; }
.grid-scroll .bar { display: flex; flex: 1464; align-items: center; justify-content: center; border: solid #d3dff0; border-width: 0 1px; background: #fff; }
.grid-scroll .bar i { width: 7px; height: 27px; background: repeating-linear-gradient(to right, #2b5fa5 0 1px, transparent 1px 3px); }
.grid-scroll .rest { flex: 520; border-right: 1px solid #d3dff0; background: #eef1f7; }

/* detail pane */
.detail { display: flex; flex-direction: column; flex: none; height: 453px; padding-top: 4px; }
.detail-tabs { padding-left: 8px; }
.detail-body { display: flex; flex: 1; min-height: 0; border-left: 8px solid #f0f0f0; }
.summary { flex: 1; min-width: 0; padding: 2px 0 0 1px; overflow: hidden; font-family: "Liberation Mono", "Noto Sans CJK SC", monospace; font-size: 20px; }
.summary p { height: 32px; line-height: 32px; white-space: pre; }
.summary b { font-family: "Noto Sans CJK SC", sans-serif; font-size: 24px; font-weight: 300; line-height: 24px; }
.marked { position: relative; }
.marked::after { content: ""; position: absolute; left: -15px; top: -16px; width: 210px; height: 54px; border: 8px solid #fd3a3a; border-radius: 8px; }
.detail-scroll { width: 41px; padding: 34px 0 0 14px; background: #efefef; }
.detail-scroll .thumb { width: 5px; height: 272px; border-radius: 3px; background: #868686; }

.status { display: flex; flex: none; height: 41px; padding-left: 4px; background: #00439d; color: #fff; font-size: 26px; line-height: 44px; white-space: nowrap; overflow: hidden; }
.status .path { flex: 1; font-size: 27px; }
.status .count { width: 411px; }
.status .index { width: 132px; overflow: hidden; }
```
